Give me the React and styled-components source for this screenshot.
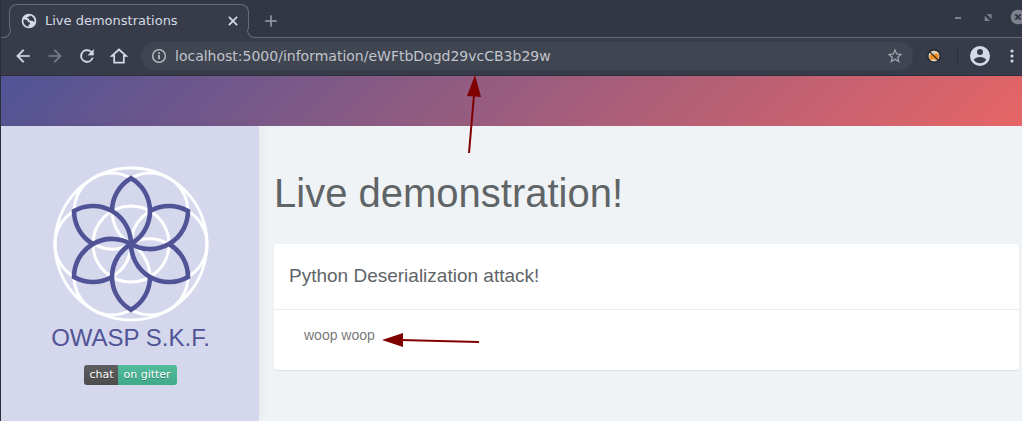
import React from "react";
import styled, { createGlobalStyle, css } from "styled-components";

const Global = createGlobalStyle`
  * { box-sizing: border-box; }
  html, body, #root { height: 100%; }
  body { margin: 0; overflow: hidden; background: #eff3f6; font-family: "Liberation Sans", Arial, sans-serif; }
  button { border: 0; padding: 0; background: none; color: inherit; font: inherit; }
  svg { display: block; }
`;

const Window = styled.div`
  position: relative;
  min-height: 100%;
  display: flex;
  flex-direction: column;
  border-left: 1px solid #2d2f3b;
`;

const TabStrip = styled.header`
  display: flex;
  align-items: flex-end;
  height: 38px;
  padding-left: 8px;
  background: #323843;
  box-shadow: inset 0 -1px #686b76;
  color: #d3dae3;
`;

const Tab = styled.div`
  position: relative;
  display: flex;
  align-items: center;
  width: 240px;
  height: 34px;
  padding: 0 8px 2px 11px;
  gap: 8px;
  border: 1px solid #686b76;
  border-bottom: 0;
  border-radius: 8px 8px 0 0;
  background: #383c4a;
  font: 13px/16px "DejaVu Sans", sans-serif;

  &::before, &::after {
    content: "";
    position: absolute;
    bottom: 0;
    width: 8px;
    height: 8px;
    border-bottom: 1px solid #686b76;
    background: #323843;
  }
  &::before { left: -8px; border-right: 1px solid #686b76; border-bottom-right-radius: 8px; box-shadow: 2px 2px #383c4a; }
  &::after { right: -8px; border-left: 1px solid #686b76; border-bottom-left-radius: 8px; box-shadow: -2px 2px #383c4a; }
`;

const TabTitle = styled.span`
  flex: 1;
`;

const IconButton = styled.button`
  display: grid;
  place-items: center;
  flex: none;
  width: ${(p) => p.$size || 32}px;
  height: ${(p) => p.$size || 32}px;
  color: ${(p) => p.$color || "#d3dae3"};
`;

const NewTab = styled(IconButton)`
  margin: 0 0 1px 6px;
`;

const WindowControls = styled.div`
  display: flex;
  align-items: center;
  gap: 14px;
  height: 38px;
  padding-bottom: 4px;
  margin-left: auto;
  margin-right: -4px;
`;

const Toolbar = styled.nav`
  display: flex;
  align-items: center;
  height: 38px;
  padding: 0 0 2px 6px;
  background: #383c4a;
  border-bottom: 1px solid #2b2e39;
  color: #d3dae3;
`;

const AddressBar = styled.label`
  flex: 1;
  display: flex;
  align-items: center;
  gap: 8px;
  height: 28px;
  margin: 0 5px 0 6px;
  padding: 0 8px 0 10px;
  border-radius: 14px;
  background: #404552;
`;

const Address = styled.input`
  flex: 1;
  min-width: 0;
  padding: 0;
  border: 0;
  outline: 0;
  background: transparent;
  color: #c0c4cb;
  font: 14px/20px "DejaVu Sans", sans-serif;
`;

const Separator = styled.span`
  width: 1px;
  height: 16px;
  margin: 0 6px 0 7px;
  background: #2b2e39;
`;

const MenuButton = styled(IconButton)`
  width: 20px;
  margin-left: 6px;
`;

const Banner = styled.div`
  height: 50px;
  background: linear-gradient(135deg, #505496, #e66566);
`;

const Page = styled.div`
  flex: 1;
  display: flex;
`;

const Sidebar = styled.aside`
  display: flex;
  flex-direction: column;
  align-items: center;
  flex: none;
  width: 258px;
  padding: 39px 0 0 1px;
  background: #d5d7ed;
  box-shadow: 0 0 12px rgba(0, 0, 0, 0.06);
`;

const Brand = styled.div`
  color: #505496;
  font-size: 24px;
  line-height: 30px;
`;

const Badge = styled.a`
  display: flex;
  margin-top: 12px;
  border-radius: 3px;
  overflow: hidden;
  color: #fff;
  font: 11px/20px "DejaVu Sans", sans-serif;
  text-decoration: none;
  text-shadow: 0 1px rgba(1, 1, 1, 0.3);
`;

const BadgePart = styled.span`
  padding: 0 ${(p) => (p.$accent ? 6 : 5)}px 0 5px;
  background: linear-gradient(rgba(187, 187, 187, 0.1), rgba(0, 0, 0, 0.1)), ${(p) => (p.$accent ? "#46bc99" : "#555")};
`;

const Main = styled.main`
  flex: 1;
  padding: 40px 3px 40px 15px;
`;

const Title = styled.h1`
  margin: 0 0 24px;
  color: #5f6467;
  font-size: 40px;
  font-weight: 400;
  line-height: 54px;
`;

const Card = styled.section`
  border-radius: 4px;
  background: #fff;
  box-shadow: 0 1px 1px rgba(0, 0, 0, 0.08);
`;

const CardTitle = styled.h2`
  margin: 0;
  padding: 20px 15px 21px;
  border-bottom: 1px solid #e9ecee;
  color: #5f6467;
  font-size: 19px;
  font-weight: 400;
  line-height: 24px;
`;

const CardText = styled.p`
  margin: 0;
  padding: 15px 30px 25px;
  color: #7b7b7b;
  font-size: 14px;
  line-height: 20px;
`;

const pointer = css`
  position: absolute;
  pointer-events: none;
`;
const UpArrow = styled.svg`
  ${pointer}
  left: 459px;
  top: 74px;
`;
const LeftArrow = styled.svg`
  ${pointer}
  left: 379px;
  top: 330px;
`;

const Icon = ({ size = 24, children, ...rest }) => (
  <svg width={size} height={size} viewBox="0 0 24 24" fill="currentColor" aria-hidden="true" {...rest}>{children}</svg>
);

const Logo = () => (
  <svg width="158" height="158" viewBox="-79 -79 158 158" fill="none" role="img" aria-label="OWASP S.K.F.">
    <g stroke="#fff" strokeWidth="3">
      <circle r="76" />
      <circle r="38" />
      {[0, 60, 120, 180, 240, 300].map((a) => <circle key={a} cx="38" r="38" transform={`rotate(${a})`} />)}
    </g>
    <g stroke="#505496" strokeWidth="4.6">
      {[0, 60, 120, 180, 240, 300].map((a) => (
        <path key={a} transform={`rotate(${a})`} d="M0 0A38 38 0 0 0 0-65.8A38 38 0 0 0-19-32.9" />
      ))}
    </g>
  </svg>
);

export default function App() {
  return (
    <Window>
      <Global />
      <TabStrip>
        <Tab>
          <Icon size={16}>
            <path fillRule="evenodd" d="M12 1a11 11 0 1 0 0 22 11 11 0 0 0 0-22zM3.800 10c1.500-.6 3.700-.6 5 .6 1 1 .8 2.300 2.200 2.800 1.500.5 2.700.8 2.600 2.300-.1 1.400-1.800 1.600-2.200 2.700-.2.8-.2 1.600-.2 2.200A8.500 8.500 0 0 1 3.800 10zM13.500 3.800A8.500 8.500 0 0 1 20.200 13c-1.600.3-2.400-.9-3.600-1.300-1.400-.4-3 .2-4.100-.8-.9-.9-.1-2-1.200-2.700-.8-.6-1.900-.2-2.300-1.100-.4-1.200 1.600-1.300 2.600-1.500 1-.3 1.700-.9 1.900-1.800z" />
          </Icon>
          <TabTitle>Live demonstrations</TabTitle>
          <IconButton $size={14} aria-label="Close tab">
            <Icon size={14}><path d="M5 5l14 14M19 5L5 19" stroke="currentColor" strokeWidth="3" /></Icon>
          </IconButton>
        </Tab>
        <NewTab aria-label="New tab" $color="#9a9fa9">
          <Icon size={14}><path d="M12 2v20M2 12h20" stroke="currentColor" strokeWidth="2.600" /></Icon>
        </NewTab>
        <WindowControls>
          <IconButton $size={16} $color="#7c818c" aria-label="Minimize">
            <Icon size={16}><path d="M7.500 12h9v3h-9z" /></Icon>
          </IconButton>
          <IconButton $size={16} $color="#7c818c" aria-label="Restore">
            <Icon size={16}><path d="M10 8h7.500v7.500zM7 10v8h8z" /></Icon>
          </IconButton>
          <IconButton $size={16} $color="#7c818c" aria-label="Close window">
            <Icon size={16}><circle cx="12" cy="12" r="11" /><path d="M8 8l8 8M16 8l-8 8" stroke="#323843" strokeWidth="3" /></Icon>
          </IconButton>
        </WindowControls>
      </TabStrip>
      <Toolbar>
        <IconButton aria-label="Back"><Icon size={20}><path d="M20 11H7.800l5.600-5.600L12 4l-8 8 8 8 1.400-1.400L7.800 13H20z" stroke="currentColor" strokeWidth=".3" /></Icon></IconButton>
        <IconButton aria-label="Forward" $color="#757985"><Icon size={20}><path d="M4 11h12.200l-5.600-5.600L12 4l8 8-8 8-1.400-1.400 5.600-5.600H4z" stroke="currentColor" strokeWidth=".3" /></Icon></IconButton>
        <IconButton aria-label="Reload"><Icon size={20}><path d="M17.650 6.350A8 8 0 1 0 19.730 14h-2.080A6 6 0 1 1 12 6c1.660 0 3.140.69 4.220 1.780L13 11h7V4z" stroke="currentColor" strokeWidth=".3" /></Icon></IconButton>
        <IconButton aria-label="Home"><Icon size={20}><path d="M6.200 11.800V20h11.600v-8.200h2.700L12 4.200l-8.500 7.600z" fill="none" stroke="currentColor" strokeWidth="2.100" /></Icon></IconButton>
        <AddressBar>
          <Icon size={16} color="#c0c4cb"><circle cx="12" cy="12" r="9.500" fill="none" stroke="currentColor" strokeWidth="2" /><path d="M10.800 10.500h2.500V17h-2.500zM10.800 6.500h2.500V9h-2.500z" /></Icon>
          <Address aria-label="Address" spellCheck="false" defaultValue="localhost:5000/information/eWFtbDogd29vcCB3b29w" />
          <IconButton $size={20} $color="#a3a7af" aria-label="Bookmark this page">
            <Icon size={18}><path d="M22 9.240l-7.190-.62L12 2 9.190 8.630 2 9.240l5.460 4.730L5.820 21 12 17.270 18.180 21l-1.630-7.030zM12 15.400l-3.760 2.270 1-4.280-3.320-2.880 4.380-.38L12 6.100l1.710 4.040 4.380.38-3.320 2.880 1 4.280z" /></Icon>
          </IconButton>
        </AddressBar>
        <IconButton aria-label="Extension">
          <Icon size={14}><circle cx="12" cy="12" r="10.500" fill="#d8d0c2" stroke="#1c1c20" strokeWidth="2" /><path d="M4 12l3-3 5 1 4-3 4 3v5l-4 4-5-2-5 2z" fill="#f28a1c" /><path d="M5 5l14 14" stroke="#1c1c20" strokeWidth="2" /></Icon>
        </IconButton>
        <Separator />
        <IconButton aria-label="Profile">
          <Icon size={24}><path fillRule="evenodd" d="M12 2a10 10 0 1 0 0 20 10 10 0 0 0 0-20zm0 3a3 3 0 1 1 0 6 3 3 0 0 1 0-6zm0 14.200a7.200 7.200 0 0 1-6-3.220c.03-1.990 4-3.080 6-3.080s5.970 1.090 6 3.080a7.200 7.200 0 0 1-6 3.220z" /></Icon>
        </IconButton>
        <MenuButton aria-label="Menu">
          <Icon size={20}><circle cx="12" cy="6" r="1.900" /><circle cx="12" cy="12" r="1.900" /><circle cx="12" cy="18" r="1.900" /></Icon>
        </MenuButton>
      </Toolbar>
      <Banner />
      <Page>
        <Sidebar>
          <Logo />
          <Brand>OWASP S.K.F.</Brand>
          <Badge href="#gitter"><BadgePart>chat</BadgePart><BadgePart $accent>on gitter</BadgePart></Badge>
        </Sidebar>
        <Main>
          <Title>Live demonstration!</Title>
          <Card>
            <CardTitle>Python Deserialization attack!</CardTitle>
            <CardText>woop woop</CardText>
          </Card>
        </Main>
      </Page>
      <UpArrow width="24" height="82" fill="#800000" aria-hidden="true">
        <path d="M15 1l6 22-14-1z" /><path d="M9 79l5-58" stroke="#800000" strokeWidth="2" />
      </UpArrow>
      <LeftArrow width="102" height="20" fill="#800000" aria-hidden="true">
        <path d="M2 10l21-7v14z" /><path d="M20 10l79 2" stroke="#800000" strokeWidth="2" />
      </LeftArrow>
    </Window>
  );
}
